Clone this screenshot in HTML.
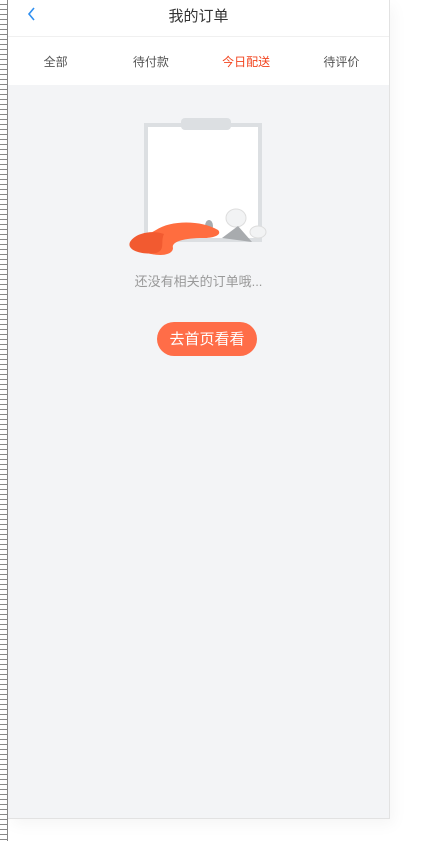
<!DOCTYPE html>
<html><head><meta charset="utf-8"><style>
body{margin:0;width:423px;height:841px;background:#fff;position:relative;overflow:hidden;font-family:"Liberation Sans","Noto Sans CJK SC",sans-serif}
.ruler{position:absolute;left:0;top:0;width:7px;height:841px;background:repeating-linear-gradient(to bottom,transparent 0,transparent 4px,#888 4px,#888 5px);border-right:1px solid #888}
.frame{position:absolute;left:8px;top:0;width:381px;height:818px;background:#f3f4f6;border-right:1px solid #e2e2e2;border-bottom:1px solid #e2e2e2;box-shadow:4px 6px 14px rgba(0,0,0,.04)}
.hdr{position:absolute;left:0;top:0;width:381px;height:36px;background:#fff;border-bottom:1px solid #f0f0f0}
.hdr .t{position:absolute;left:0;right:0;top:5px;text-align:center;font-size:15px;color:#333}
.tabs{position:absolute;top:37px;left:0;width:381px;height:48px;background:#fff;display:flex}
.tabs div{flex:1;text-align:center;line-height:50px;font-size:12px;color:#555}
.tabs .a{color:#f2441f}
.msg{position:absolute;left:0;right:0;top:271px;text-align:center;font-size:13px;color:#999}
.btn{position:absolute;left:149px;top:322px;width:100px;height:34px;border-radius:17px;background:#ff6d48;color:#fff;font-size:15px;text-align:center;line-height:35px}
</style></head><body>
<div class="ruler"></div>
<div class="frame">
<div class="hdr"><svg style="position:absolute;left:19px;top:7px" width="10" height="14" viewBox="0 0 10 14"><path d="M7 1L2 7l5 6" fill="none" stroke="#2f8ff0" stroke-width="1.6"/></svg><div class="t">我的订单</div></div>
<div class="tabs"><div>全部</div><div>待付款</div><div class="a">今日配送</div><div>待评价</div></div>
<svg style="position:absolute;left:118px;top:114px" width="145" height="145" viewBox="0 0 145 145">
<rect x="20" y="11" width="114" height="115" fill="#fff" stroke="#dcdfe2" stroke-width="4"/>
<rect x="55" y="4" width="50" height="12" rx="4" fill="#dcdfe2"/>
<ellipse cx="83" cy="112" rx="4" ry="6" fill="#a8abae"/>
<ellipse cx="110" cy="104" rx="10" ry="9" fill="#f2f3f4" stroke="#ddd"/>
<ellipse cx="132" cy="118" rx="8" ry="6" fill="#f2f3f4" stroke="#ddd"/>
<path d="M96 124l16-12 14 16z" fill="#a8abae"/>
<path d="M30 116c15-10 45-10 62 0 4 4-2 8-15 8-20 0-32 4-30 10 0 6-10 10-30 4-8-3-10-10 13-22z" fill="#ff6d3f"/>
<path d="M4 128c6-10 24-12 34-8-4 8 2 16-8 19-12 2-30-2-26-11z" fill="#f25a30"/>
</svg>
<div class="msg">还没有相关的订单哦...</div>
<div class="btn">去首页看看</div>
</div>
</body></html>
